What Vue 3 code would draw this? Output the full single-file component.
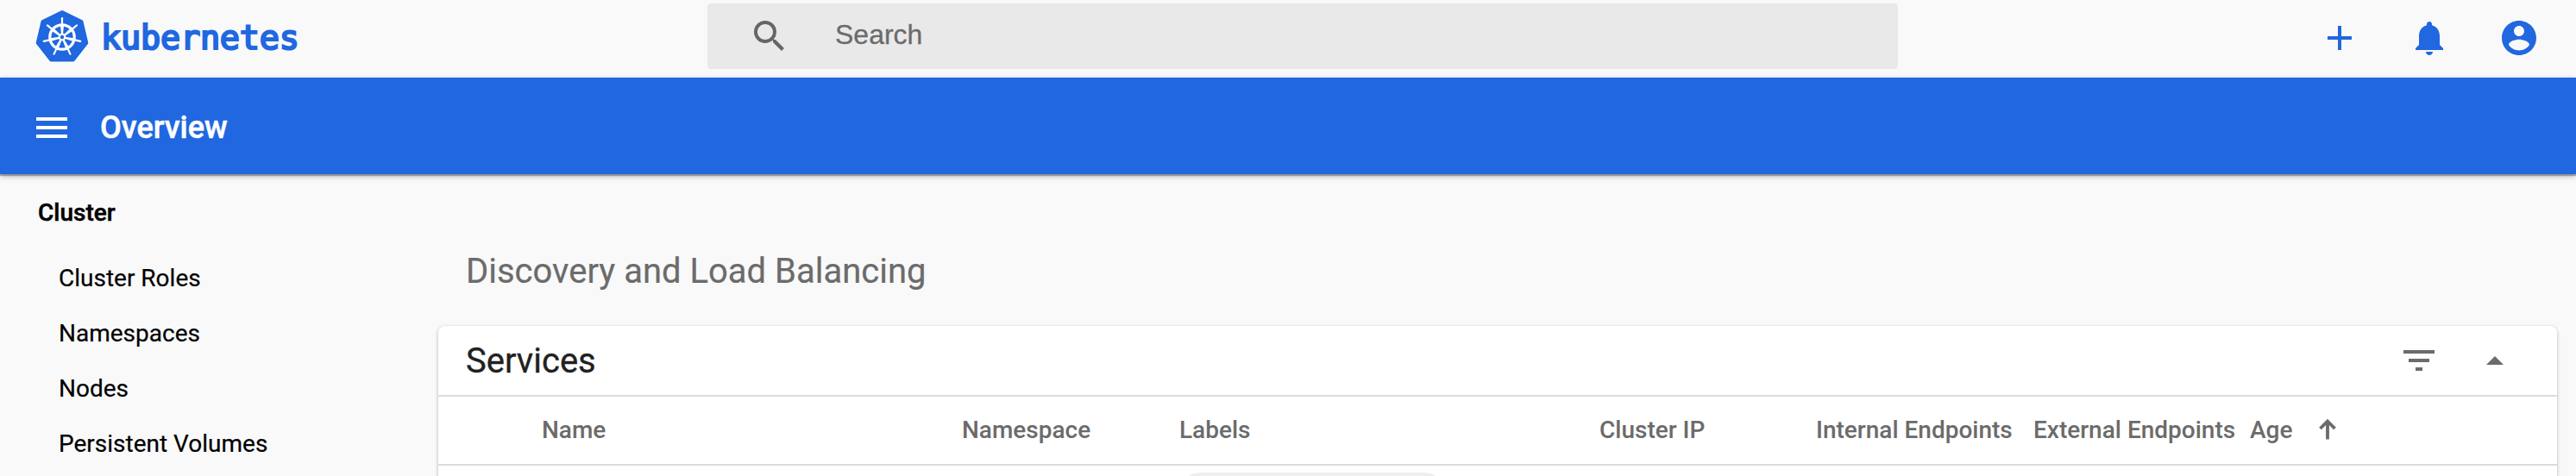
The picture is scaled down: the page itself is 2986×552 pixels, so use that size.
<script setup>
const spokes = Array.from({ length: 7 }, (_, i) => `rotate(${(i * 360) / 7} 35 36)`)
const items = ['Cluster Roles', 'Namespaces', 'Nodes', 'Persistent Volumes']
const columns = ['', 'Name', 'Namespace', 'Labels', 'Cluster IP', 'Internal Endpoints', 'External Endpoints']
</script>

<template>
  <div class="page">
    <header class="top">
      <a class="brand">
        <svg class="logo" width="70" height="70" viewBox="0 0 70 70">
          <path d="M35 7 L57.5 18 L63.3 42.8 L47.8 62.5 H22.2 L6.7 42.8 L12.5 18Z" fill="#fff" stroke="#fff" stroke-width="7" stroke-linejoin="round" />
          <path d="M35 7 L57.5 18 L63.3 42.8 L47.8 62.5 H22.2 L6.7 42.8 L12.5 18Z" fill="#2067e0" stroke="#2067e0" stroke-width="4" stroke-linejoin="round" />
          <circle cx="35" cy="36" r="14.2" fill="none" stroke="#fff" stroke-width="3.2" />
          <g v-for="t in spokes" :key="t" :transform="t" stroke="#fff" stroke-linecap="round">
            <path d="M35 22V14.2" stroke-width="2.2" />
            <path d="M33 22H37L36 33H34Z" fill="#fff" stroke="none" />
          </g>
          <circle cx="35" cy="36" r="3.3" fill="#2067e0" stroke="#fff" stroke-width="2.2" />
        </svg>
        <span class="word">kubernetes</span>
      </a>
      <div class="search">
        <svg width="48" height="48" viewBox="0 0 24 24"><path fill="#666" d="M15.5 14h-.79l-.28-.27A6.471 6.471 0 0 0 16 9.5 6.5 6.5 0 1 0 9.5 16c1.61 0 3.09-.59 4.23-1.57l.27.28v.79l5 4.99L20.49 19l-4.99-5zm-6 0C7.01 14 5 11.99 5 9.5S7.01 5 9.5 5 14 7.01 14 9.5 11.99 14 9.5 14z" /></svg>
        <span>Search</span>
      </div>
      <div class="actions">
        <svg width="48" height="48" viewBox="0 0 24 24"><path d="M19 13h-6v6h-2v-6H5v-2h6V5h2v6h6v2z" /></svg>
        <svg width="48" height="48" viewBox="0 0 24 24"><path d="M12 22c1.1 0 2-.9 2-2h-4c0 1.1.89 2 2 2zm6-6v-5c0-3.07-1.64-5.64-4.5-6.32V4c0-.83-.67-1.5-1.5-1.5s-1.5.67-1.5 1.5v.68C7.63 5.36 6 7.92 6 11v5l-2 2v1h16v-1l-2-2z" /></svg>
        <svg width="48" height="48" viewBox="0 0 24 24"><path d="M12 2C6.48 2 2 6.48 2 12s4.48 10 10 10 10-4.48 10-10S17.52 2 12 2zm0 3c1.66 0 3 1.34 3 3s-1.34 3-3 3-3-1.34-3-3 1.34-3 3-3zm0 14.2c-2.5 0-4.71-1.28-6-3.22.03-1.99 4-3.08 6-3.08 1.99 0 5.97 1.09 6 3.08-1.29 1.94-3.5 3.22-6 3.22z" /></svg>
      </div>
    </header>

    <div class="bar">
      <svg class="menu" width="48" height="48" viewBox="0 0 24 24"><path fill="#fff" d="M3 18h18v-2H3v2zm0-5h18v-2H3v2zm0-7v2h18V6H3z" /></svg>
      <h1>Overview</h1>
    </div>

    <div class="body">
      <nav>
        <div class="group">Cluster</div>
        <a v-for="i in items" :key="i">{{ i }}</a>
      </nav>
      <main>
        <h2>Discovery and Load Balancing</h2>
        <section class="card">
          <div class="card-head">
            <h3>Services</h3>
            <svg class="filter" width="48" height="48" viewBox="0 0 24 24"><path d="M10 18h4v-2h-4v2zM3 6v2h18V6H3zm3 7h12v-2H6v2z" /></svg>
            <svg class="caret" width="20" height="10" viewBox="0 0 20 10"><path d="M0 10L10 0l10 10z" /></svg>
          </div>
          <div class="grid head">
            <span v-for="c in columns" :key="c">{{ c }}</span>
            <span class="age">Age
              <svg width="20" height="24" viewBox="0 0 20 24"><path d="M10 23.5V3M1.5 11L10 2.5 18.5 11" fill="none" stroke="#6b6b6b" stroke-width="3.8" /></svg>
            </span>
          </div>
          <div class="grid row"><span class="chip"></span></div>
        </section>
      </main>
    </div>
  </div>
</template>

<style>
body { margin: 0; overflow: hidden; }
</style>

<style scoped>
.page { width: 2986px; height: 552px; overflow: hidden; background: #f9f9f9; font-family: Roboto, sans-serif; display: flex; flex-direction: column; }
svg { display: block; flex: none; }
h1, h2, h3 { margin: 0; font-weight: 400; }
.top { height: 90px; flex: none; display: flex; box-sizing: border-box; }
.brand { width: 820px; display: flex; padding: 7px 0 0 37px; box-sizing: border-box; }
.word { margin-left: 10px; font: 38.5px/73px "DejaVu Sans Mono", monospace; letter-spacing: -.2px; color: #2067e0; -webkit-text-stroke: 2.2px #2067e0; }
.search { margin-top: 4px; width: 1380px; height: 76px; border-radius: 4px; background: #e9e9e9; display: flex; align-items: center; box-sizing: border-box; padding-left: 48px; font: 32px "Liberation Sans", sans-serif; color: #6b6b6b; }
.search span { margin: 0 0 3px 52px; -webkit-text-stroke: .3px; }
.actions { margin-left: auto; padding: 20px 42px 0 0; display: flex; gap: 56px; fill: #2067e0; }
.bar { height: 112px; flex: none; background: #2067e0; display: flex; align-items: center; padding-left: 36px; box-shadow: 0 0 4px rgba(0,0,0,.1), 0 3px 6px rgba(0,0,0,.22), 0 2px 1px rgba(0,0,0,.25); position: relative; }
.menu { margin-top: 4px; }
h1 { margin: 3px 0 0 32px; font-size: 36px; font-weight: 500; line-height: 48px; color: #fff; -webkit-text-stroke: .5px; }
.body { display: flex; flex: 1; }
nav { width: 508px; padding-top: 13px; box-sizing: border-box; display: flex; flex-direction: column; font-size: 28px; color: #000; -webkit-text-stroke: .2px; }
.group { height: 64px; line-height: 64px; margin: 0 0 12px 44px; font-weight: 500; -webkit-text-stroke: .5px; }
nav a { height: 64px; line-height: 64px; padding-left: 68px; }
main { width: 2456px; }
h2 { height: 176px; box-sizing: border-box; padding: 85px 0 0 32px; font-size: 40px; line-height: 56px; color: #6b6b6b; -webkit-text-stroke: .2px; }
.card { height: 240px; background: #fff; border-radius: 8px; box-shadow: 0 2px 4px rgba(0,0,0,.2), 0 0 4px rgba(0,0,0,.08); }
.card-head { height: 82px; box-sizing: border-box; border-bottom: 2px solid #dcdcdc; display: flex; align-items: center; padding: 0 62px 0 32px; fill: #6b6b6b; }
h3 { flex: 1; font-size: 40px; color: #212121; -webkit-text-stroke: .3px; }
.caret { margin-left: 54px; }
.grid { display: grid; grid-template-columns: 120px 487px 252px 487px 251px 252px 251px 1fr; }
.head { height: 80px; box-sizing: border-box; padding-bottom: 2px; border-bottom: 2px solid #dcdcdc; align-items: center; font-size: 28px; font-weight: 500; color: #6b6b6b; white-space: nowrap; }
.age { display: flex; align-items: center; gap: 31px; }
.row { padding-top: 8px; }
.chip { grid-column: 4; width: 308px; height: 48px; border-radius: 24px; background: #eee; }
</style>
